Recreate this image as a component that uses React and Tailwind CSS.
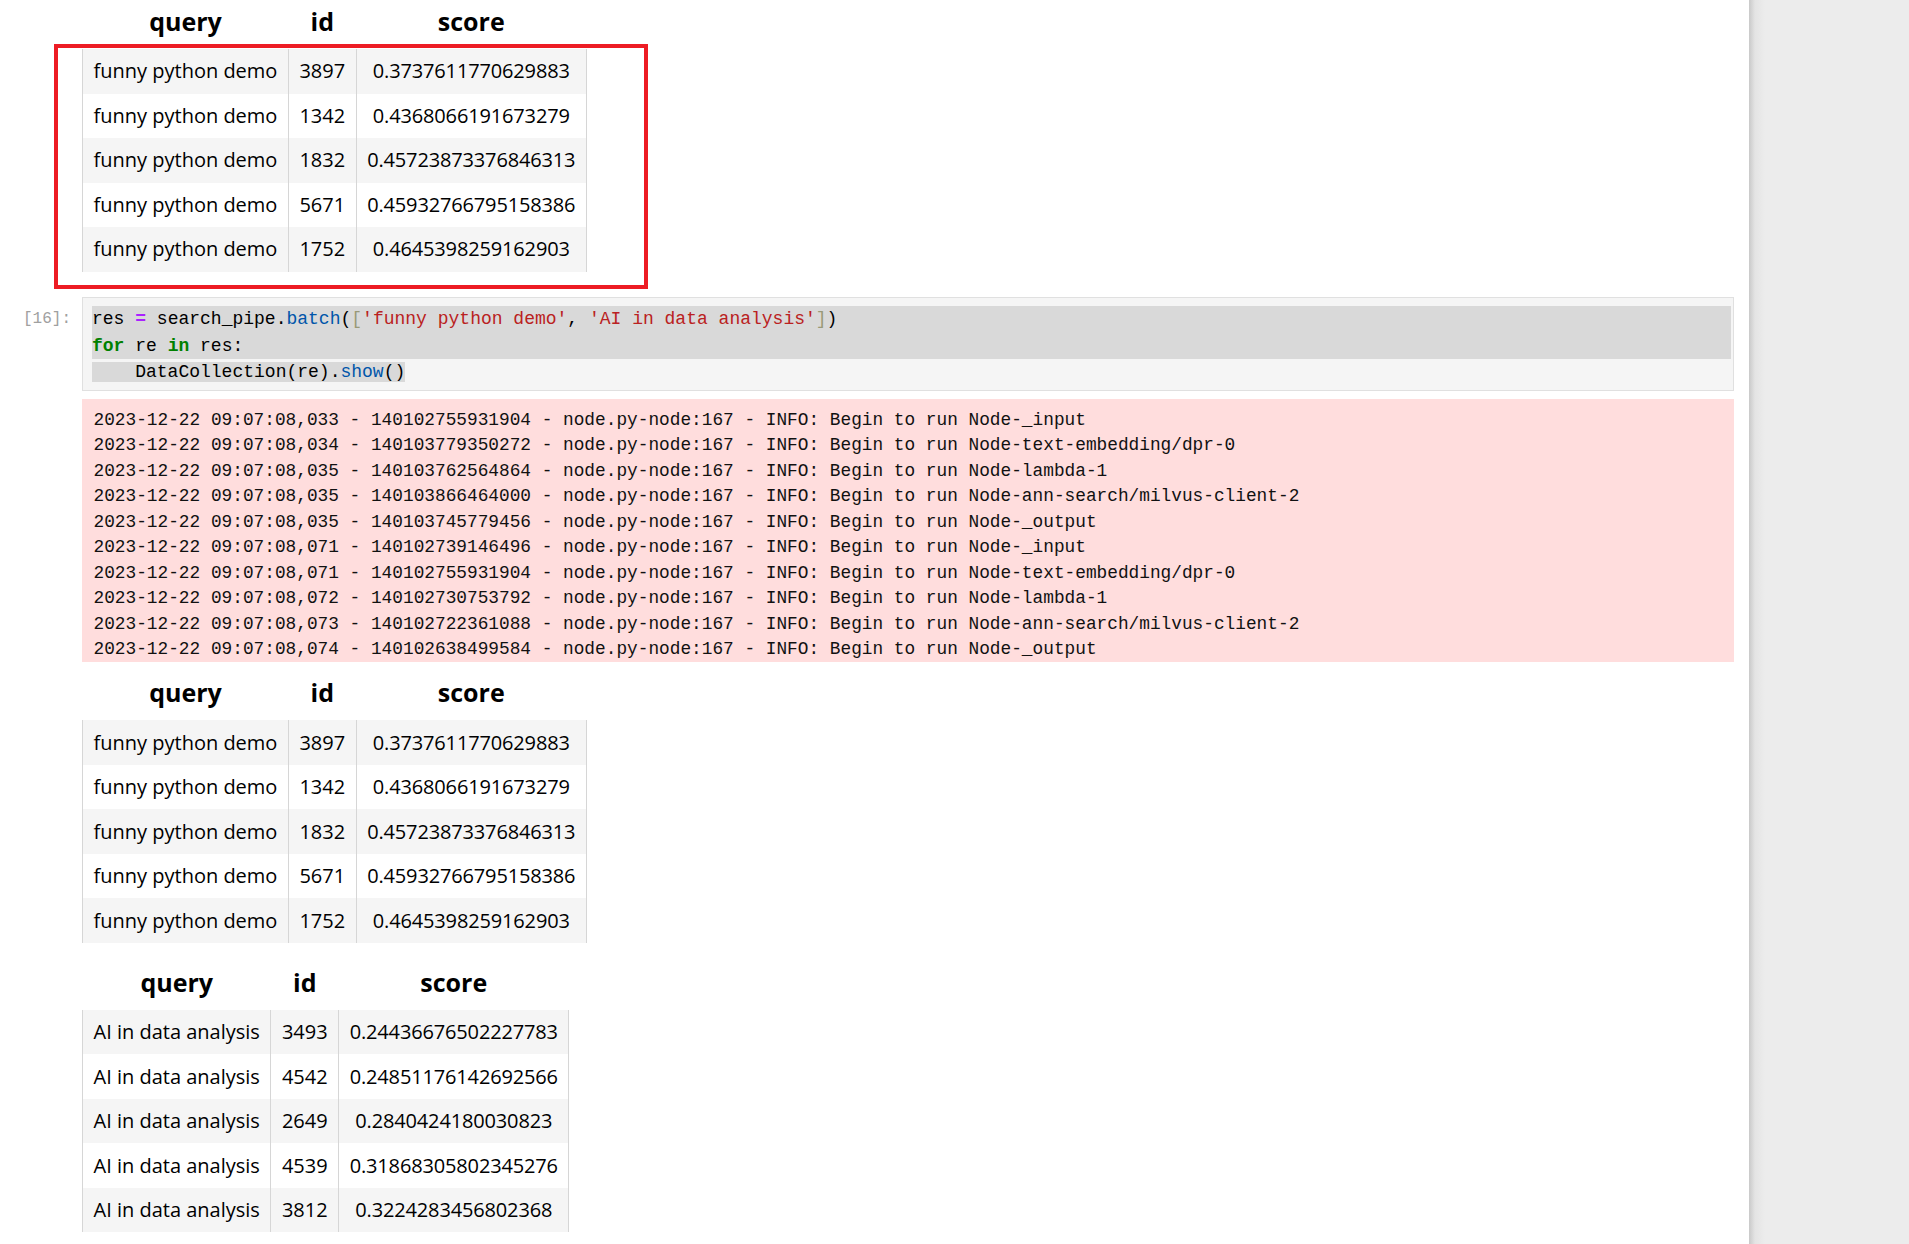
import React from 'react';

const funny = [
  ['funny python demo', '3897', '0.3737611770629883'],
  ['funny python demo', '1342', '0.4368066191673279'],
  ['funny python demo', '1832', '0.45723873376846313'],
  ['funny python demo', '5671', '0.45932766795158386'],
  ['funny python demo', '1752', '0.4645398259162903'],
];

const ai = [
  ['AI in data analysis', '3493', '0.24436676502227783'],
  ['AI in data analysis', '4542', '0.24851176142692566'],
  ['AI in data analysis', '2649', '0.2840424180030823'],
  ['AI in data analysis', '4539', '0.31868305802345276'],
  ['AI in data analysis', '3812', '0.3224283456802368'],
];

const logs = [
  ['033', '140102755931904', 'Node-_input'],
  ['034', '140103779350272', 'Node-text-embedding/dpr-0'],
  ['035', '140103762564864', 'Node-lambda-1'],
  ['035', '140103866464000', 'Node-ann-search/milvus-client-2'],
  ['035', '140103745779456', 'Node-_output'],
  ['071', '140102739146496', 'Node-_input'],
  ['071', '140102755931904', 'Node-text-embedding/dpr-0'],
  ['072', '140102730753792', 'Node-lambda-1'],
  ['073', '140102722361088', 'Node-ann-search/milvus-client-2'],
  ['074', '140102638499584', 'Node-_output'],
];

const DataTable = ({ rows }) => {
  return (
    <table className="border-collapse font-['Open_Sans',sans-serif] text-black">
      <thead>
        <tr className="h-[55px]">
          <th className="px-[10.5px] text-center text-[25px] font-bold leading-none">query</th>
          <th className="px-[10.5px] text-center text-[25px] font-bold leading-none">id</th>
          <th className="px-[10.5px] text-center text-[25px] font-bold leading-none">score</th>
        </tr>
      </thead>
      <tbody>
        {rows.map((r, i) => (
          <tr key={i} className={i % 2 === 0 ? 'h-[44.5px] bg-[#f5f5f5]' : 'h-[44.5px] bg-white'}>
            <td className="border-x border-[#d6d6d6] px-[10.5px] text-center text-[20px] leading-none whitespace-nowrap">{r[0]}</td>
            <td className="border-x border-[#d6d6d6] px-[10.5px] text-center text-[20px] leading-none whitespace-nowrap">{r[1]}</td>
            <td className="border-x border-[#d6d6d6] px-[10.5px] text-center text-[20px] leading-none tracking-[-0.15px] whitespace-nowrap">{r[2]}</td>
          </tr>
        ))}
      </tbody>
    </table>
  );
};

const App = () => {
  return (
    <div className="relative flex h-[1244px] w-full overflow-hidden bg-white">
      <div className="flex w-[1749px] shrink-0 flex-col">
        {/* first output, partly scrolled off */}
        <div className="-mt-[6px] pl-[82px]">
          <DataTable rows={funny} />
        </div>

        {/* code cell */}
        <div className="mt-[25.5px] flex">
          <div className="w-[82px] shrink-0 pr-[11px] pt-[9px] text-right font-['Liberation_Mono',monospace] text-[16px] leading-[26.67px] text-[#a0a0a0]">
            [16]:
          </div>
          <div className="w-[1652px] border border-[#e0e0e0] bg-[#f5f5f5] pt-[8px] pb-[4px] pl-[9px] pr-[2px] font-['Liberation_Mono',monospace] text-[18px] leading-[26.67px] text-black whitespace-pre">
            <div className="bg-[#d9d9d9]">
              res <span className="font-bold text-[#aa22ff]">=</span> search_pipe.<span className="text-[#0055aa]">batch</span>(<span className="text-[#999977]">[</span><span className="text-[#ba2121]">'funny python demo'</span>, <span className="text-[#ba2121]">'AI in data analysis'</span><span className="text-[#999977]">]</span>)
            </div>
            <div className="bg-[#d9d9d9]">
              <span className="font-bold text-[#008000]">for</span> re <span className="font-bold text-[#008000]">in</span> res:
            </div>
            <div>
              <span className="bg-[#d9d9d9]">    DataCollection(re).<span className="text-[#0055aa]">show</span>()</span>
            </div>
          </div>
        </div>

        {/* stderr log */}
        <div className="ml-[82px] mt-[8px] w-[1652px] bg-[#fdd] pt-[9px] pl-[11.5px] font-['Liberation_Mono',monospace] text-[17.8px] leading-[25.44px] text-[#111] whitespace-pre">
          {logs.map((l, i) => (
            <div key={i}>
              2023-12-22 09:07:08,{l[0]} - {l[1]} - node.py-node:167 - INFO: Begin to run {l[2]}
            </div>
          ))}
        </div>

        <div className="mt-[3px] pl-[82px]">
          <DataTable rows={funny} />
        </div>

        <div className="mt-[12px] pl-[82px]">
          <DataTable rows={ai} />
        </div>
      </div>

      {/* right side panel */}
      <div className="flex-1 bg-[linear-gradient(to_right,#c9c9c9,#e4e4e4_6px,#ececec_16px)]"></div>

      {/* red annotation */}
      <div className="absolute left-[54px] top-[44px] h-[245px] w-[594px] border-4 border-[#ed1c24]"></div>
    </div>
  );
};

export default App;
